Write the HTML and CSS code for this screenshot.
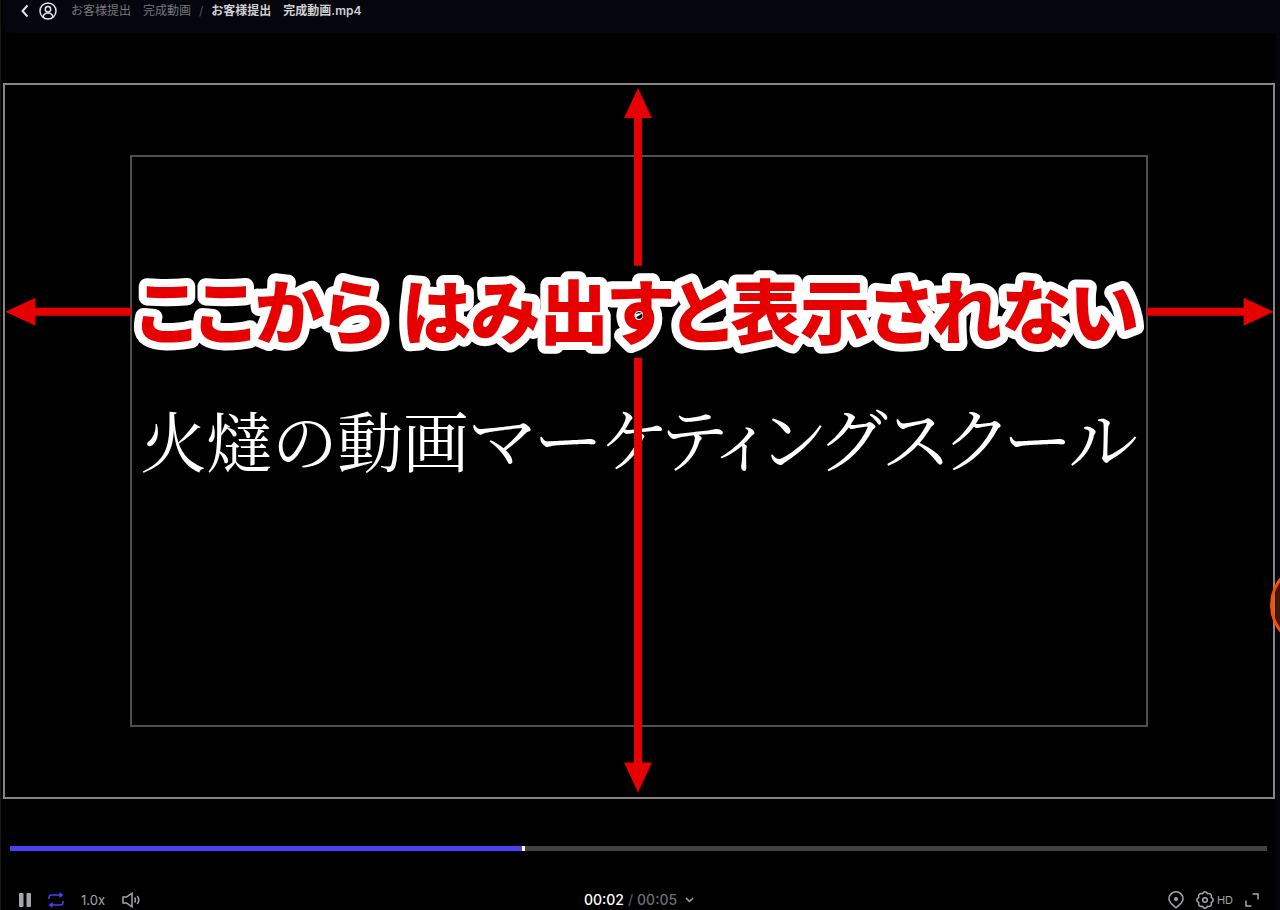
FILE: index.html
```
<!DOCTYPE html>
<html lang="ja">
<head>
    <meta charset="UTF-8">
    <meta name="viewport" content="width=device-width, initial-scale=1.0">
    <title>完成動画.mp4</title>
    <link rel="stylesheet" href="styles.css">
</head>
<body>
    <div class="player">
        <header class="topbar">
            <button class="icon-btn back" aria-label="戻る">
                <svg width="8" height="14" viewBox="0 0 8 14"><path d="M6.5 1.5 1.5 7l5 5.500"/></svg>
            </button>
            <button class="icon-btn account" aria-label="アカウント">
                <svg width="18" height="18" viewBox="0 0 18 18">
                    <circle cx="9" cy="9" r="8"/>
                    <circle cx="9" cy="7.300" r="2.700"/>
                    <path d="M4 15c.6-2.600 2.400-4 5-4s4.400 1.400 5 4"/>
                </svg>
            </button>
            <nav class="breadcrumb">
                <a href="#">お客様提出　完成動画</a>
                <span class="slash">/</span>
                <strong>お客様提出　完成動画.mp4</strong>
            </nav>
        </header>

        <main class="stage">
            <div class="video">
                <div class="safe-area">
                    <p class="caption">火燵の動画<span class="kana">マーケティングスクール</span></p>
                </div>
                <svg class="notes" viewBox="0 0 1272 716">
                    <path d="M635 5l14 30h-10v148h-8V35h-10z"/>
                    <path d="M631 275h8v405h10l-14 30-14-30h10z"/>
                    <path d="M2 229l30-14v10h96v8H32v10z"/>
                    <path d="M1144 225h97v-10l30 14-30 14v-10h-97z"/>
                    <text class="headline" x="635" y="256">ここから はみ出すと表示されない</text>
                </svg>
            </div>
        </main>

        <footer class="controls">
            <input class="seek" type="range" min="0" max="5" step="0.01" value="2.04" aria-label="再生位置" style="--played: 40.8%">
            <div class="control-row">
                <div class="group left">
                    <button class="icon-btn pause" aria-label="一時停止">
                        <svg width="12" height="14" viewBox="0 0 12 14"><rect x="0" y="0" width="4.500" height="14" rx="1"/><rect x="7.500" y="0" width="4.500" height="14" rx="1"/></svg>
                    </button>
                    <button class="icon-btn loop" aria-label="ループ">
                        <svg width="16" height="16" viewBox="0 0 16 16">
                            <path d="M1 7V5.500C1 4 2 3 3.500 3H12M15 9v1.500c0 1.500-1 2.500-2.500 2.500H4"/>
                            <path class="solid" d="M11.500 0 15.500 3l-4 3zM4.500 10 .5 13l4 3z"/>
                        </svg>
                    </button>
                    <button class="speed">1.0x</button>
                    <button class="icon-btn volume" aria-label="音量">
                        <svg width="18" height="16" viewBox="0 0 18 16">
                            <path d="M1 5h3.500L10 1.200v13.600L4.500 11H1zM12.600 5.500c1 1.500 1 3.500 0 5M15.200 4c1.900 2.400 1.900 5.600 0 8"/>
                        </svg>
                    </button>
                </div>
                <button class="time">
                    <span class="now">00:02</span>
                    <span class="slash">/</span>
                    <span>00:05</span>
                    <svg width="9" height="6" viewBox="0 0 9 6"><path d="M1 1l3.500 3.500L8 1"/></svg>
                </button>
                <div class="group right">
                    <button class="icon-btn pin" aria-label="マーカー">
                        <svg width="16" height="18" viewBox="0 0 16 18">
                            <path d="M8 16.800C5.500 14.700 1 11.800 1 7.800a7 7 0 0 1 14 0c0 4-4.500 6.900-7 9z"/>
                            <circle class="solid" cx="8" cy="8" r="2"/>
                        </svg>
                    </button>
                    <button class="icon-btn quality" aria-label="画質 HD">
                        <svg width="18" height="18" viewBox="0 0 18 18">
                            <path d="M6.400 2.700Q9-1 11.600 2.700 16.100 1.900 15.300 6.400 19 9 15.300 11.600 16.100 16.100 11.600 15.300 9 19 6.400 15.300 1.900 16.100 2.700 11.600-1 9 2.700 6.400 1.900 1.900 6.400 2.700z"/>
                            <circle cx="9" cy="9" r="2.300"/>
                        </svg>
                        <span>HD</span>
                    </button>
                    <button class="icon-btn expand" aria-label="全画面">
                        <svg width="14" height="14" viewBox="0 0 14 14"><path d="M7.500 1H13v5.500M1 7.500V13h5.500"/></svg>
                    </button>
                </div>
            </div>
        </footer>
    </div>
    <div class="touch-ring"></div>
</body>
</html>
```
FILE: styles.css
```
* {
    box-sizing: border-box;
}

body {
    margin: 0;
    background-color: #000;
    color: #a5a5ad;
    font-family: Inter, "Noto Sans CJK JP", sans-serif;
}

button {
    display: flex;
    align-items: center;
    padding: 0;
    border: none;
    background: none;
    color: inherit;
    font-family: inherit;
    cursor: pointer;
}

svg {
    display: block;
    fill: none;
    stroke: currentColor;
    stroke-width: 1.5;
}

.solid {
    fill: currentColor;
    stroke: none;
}

.player {
    display: flex;
    flex-direction: column;
    min-height: 100vh;
    border-left: 1px solid #17171a;
    border-right: 4px solid #04060c;
}

/* top bar */
.topbar {
    display: flex;
    align-items: center;
    height: 33px;
    margin-left: 2px;
    padding: 0 18px 11px;
    background-color: #05060d;
    border-radius: 0 0 0 8px;
}

.back,
.account {
    color: #e4e4e8;
}

.back svg {
    stroke-width: 2;
}

.account {
    margin-left: 10px;
}

.breadcrumb {
    display: flex;
    gap: 8px;
    margin-left: 14px;
    font-size: 12px;
    line-height: 20px;
    white-space: nowrap;
}

.breadcrumb a {
    color: #77777e;
    text-decoration: none;
}

.breadcrumb strong {
    color: #d0d0d4;
    font-weight: 600;
}

.slash {
    color: #55555b;
}

/* video */
.stage {
    padding: 50px 1px 0 2px;
}

.video {
    position: relative;
    display: flex;
    width: 100%;
    aspect-ratio: 16 / 9;
    box-shadow: inset 0 0 0 2px #858585;
}

.safe-area {
    display: flex;
    align-items: center;
    justify-content: center;
    width: 80%;
    height: 80%;
    margin: auto;
    border: 2px solid #4f4f4f;
}

.caption {
    margin: 0 0 6px;
    color: #fff;
    font-family: "Noto Serif CJK JP", "Noto Sans CJK JP", serif;
    font-size: 66px;
    font-weight: 400;
    font-feature-settings: "palt";
    line-height: 80px;
    white-space: nowrap;
}

.kana {
    font-size: 70px;
}

/* arrows and headline drawn over the video */
.notes {
    position: absolute;
    top: 0;
    left: 0;
    width: 100%;
    height: 100%;
    fill: #e60000;
    stroke: none;
}

.headline {
    font-family: "Noto Sans CJK JP", sans-serif;
    font-size: 70px;
    font-weight: 900;
    font-feature-settings: "palt";
    text-anchor: middle;
    stroke: #fff;
    stroke-width: 16px;
    stroke-linejoin: round;
    paint-order: stroke fill;
}

/* controls */
.controls {
    margin-top: auto;
    padding: 0 9px;
}

.seek {
    display: block;
    width: 100%;
    height: 5px;
    margin: 0 0 38px;
    background: linear-gradient(to right, #4b40f5 var(--played), #414141 var(--played));
    appearance: none;
}

.seek::-webkit-slider-thumb {
    width: 3px;
    height: 5px;
    background-color: #fff;
    appearance: none;
}

.control-row {
    display: grid;
    grid-template-columns: 1fr auto 1fr;
    align-items: center;
    height: 21px;
    padding: 0 8px 0 9px;
}

.group {
    display: flex;
    align-items: center;
    gap: 17px;
}

.right {
    justify-content: flex-end;
    gap: 12px;
}

.pause svg {
    fill: currentColor;
    stroke: none;
}

.loop {
    color: #4b40f5;
}

.speed {
    font-size: 13px;
}

.time {
    gap: 4px;
    color: #6f6f76;
    font-size: 14px;
    font-weight: 500;
    line-height: 20px;
}

.time .now {
    color: #fff;
}

.time svg {
    margin-left: 4px;
    color: #a5a5ad;
}

.quality {
    gap: 3px;
    font-size: 11px;
}

/* tap marker hanging over the right edge */
.touch-ring {
    position: fixed;
    top: 562px;
    right: -76px;
    width: 86px;
    height: 86px;
    border: 3px solid #ff4d00;
    border-radius: 50%;
    background-color: rgba(255, 77, 0, 0.25);
}
```
